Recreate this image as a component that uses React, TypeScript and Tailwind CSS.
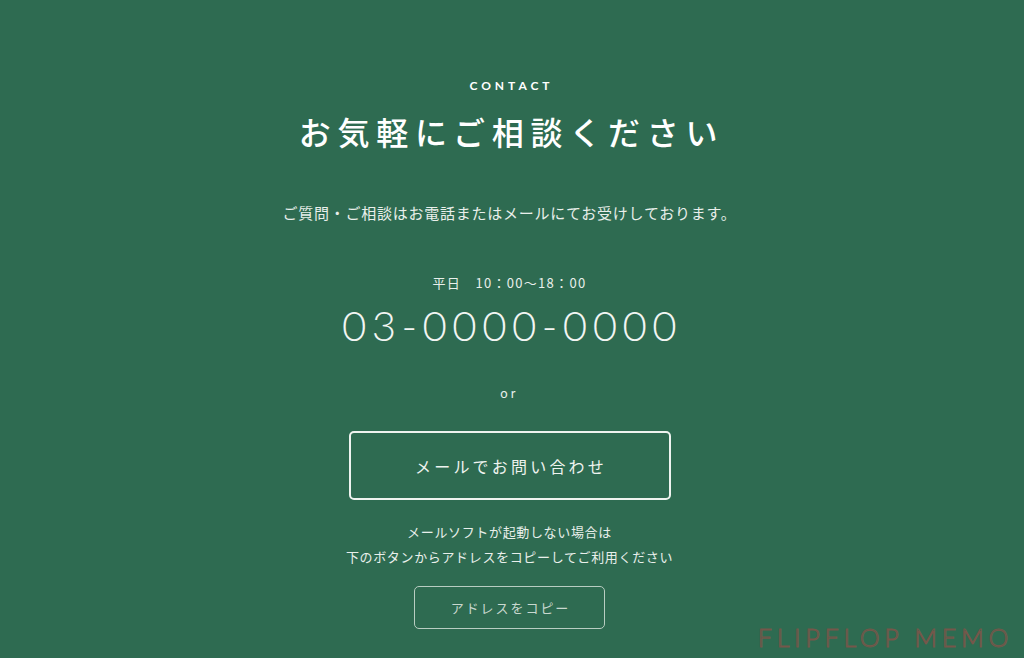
export default function App() {
  return (
    <div
      className="relative w-full h-[658px] bg-[#2e6b51] text-white overflow-hidden"
      style={{ fontFamily: '"Noto Sans CJK JP", "Noto Sans", sans-serif' }}
    >
      <section className="flex flex-col items-center pt-[79px] pr-[5px]">
        <p className="font-['Lato',sans-serif] font-bold text-[12px] tracking-[0.33em] leading-[14px] pl-[4px]">
          CONTACT
        </p>
        <h2 className="mt-[16px] text-[32px] leading-[44px] font-medium tracking-[0.21em] pl-[4px]">
          お気軽にご相談ください
        </h2>

        <p className="mt-[49px] text-[15px] leading-[22px] text-[#e9efeb] tracking-[0.05em]">
          ご質問・ご相談はお電話またはメールにてお受けしております。
        </p>

        <p className="mt-[50px] text-[13px] leading-[18px] text-[#e9efeb] tracking-[0.1em]">
          平日　10：00〜18：00
        </p>
        <p className="mt-[8px] font-['Lato',sans-serif] font-light text-[42px] leading-[50px] tracking-[0.13em] pl-[5px] text-[#f2f5f3]">
          03-0000-0000
        </p>

        <p className="mt-[35px] font-['Lato',sans-serif] text-[13px] leading-[16px] tracking-[0.25em] text-[#e9efeb]">
          or
        </p>

        <button className="mt-[30px] w-[322px] h-[69px] border-2 border-[#eef3ef] rounded-[5px] text-[16px] tracking-[0.2em] pl-[3px] text-[#eef3ef]">
          メールでお問い合わせ
        </button>

        <div className="mt-[19px] flex flex-col items-center text-[13px] leading-[25px] tracking-[0.05em] text-[#e9efeb]">
          <p>メールソフトが起動しない場合は</p>
          <p>下のボタンからアドレスをコピーしてご利用ください</p>
        </div>

        <button className="mt-[17px] w-[191px] h-[43px] border border-[#b9cdc2] rounded-[5px] text-[13px] tracking-[0.15em] pl-[2px] text-[#c9d8cf]">
          アドレスをコピー
        </button>
      </section>

      <span
        className="absolute right-[11px] bottom-[9px] font-['Lato',sans-serif] font-light text-[25px] leading-[24px] tracking-[0.19em] text-transparent"
        style={{ WebkitTextStroke: '1px #75574a' }}
      >
        FLIPFLOP MEMO
      </span>
    </div>
  );
}
